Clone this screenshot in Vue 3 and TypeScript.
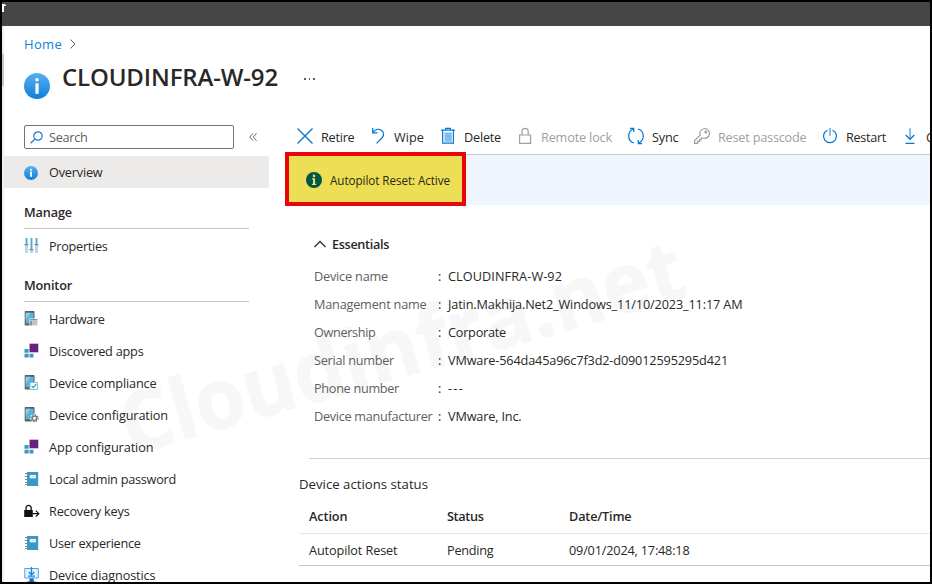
<script setup lang="ts">
import type { Directive } from 'vue'

interface NavItem { label: string; icon: string; width: number }
interface Command { label: string; icon: string; width: number; disabled?: boolean }
interface Essential { label: string; labelWidth: number; value: string; width: number }

// Tracks a text run so that it takes up the given width in pixels.
const vFit: Directive<HTMLElement, number> = {
  mounted(el, binding) {
    const count = (el.textContent ?? '').length
    const natural = el.getBoundingClientRect().width
    el.style.letterSpacing = `${(binding.value - natural) / count}px`
  },
}

const manage: NavItem[] = [{ label: 'Properties', icon: 'sliders', width: 58.5 }]

const monitor: NavItem[] = [
  { label: 'Hardware', icon: 'hardware', width: 55.5 },
  { label: 'Discovered apps', icon: 'apps', width: 94.5 },
  { label: 'Device compliance', icon: 'compliance', width: 107.5 },
  { label: 'Device configuration', icon: 'config', width: 119 },
  { label: 'App configuration', icon: 'apps', width: 104.5 },
  { label: 'Local admin password', icon: 'book', width: 127 },
  { label: 'Recovery keys', icon: 'lock', width: 80.5 },
  { label: 'User experience', icon: 'book', width: 91.5 },
  { label: 'Device diagnostics', icon: 'monitor', width: 106.5 },
]

const groups = [
  { title: 'Manage', width: 48, items: manage },
  { title: 'Monitor', width: 48, items: monitor },
]

const commands: Command[] = [
  { label: 'Retire', icon: 'close', width: 33.5 },
  { label: 'Wipe', icon: 'undo', width: 30 },
  { label: 'Delete', icon: 'trash', width: 37 },
  { label: 'Remote lock', icon: 'padlock', width: 71 },
  { label: 'Sync', icon: 'sync', width: 26.5 },
  { label: 'Reset passcode', icon: 'key', width: 88.5 },
  { label: 'Restart', icon: 'power', width: 40 },
  { label: 'Collect diagnostics', icon: 'download', width: 112 },
].map((c) => ({ ...c, disabled: c.icon === 'padlock' || c.icon === 'key' }))

const essentials: Essential[] = [
  { label: 'Device name', labelWidth: 74, value: 'CLOUDINFRA-W-92', width: 114 },
  { label: 'Management name', labelWidth: 112.5, value: 'Jatin.Makhija.Net2_Windows_11/10/2023_11:17 AM', width: 294.5 },
  { label: 'Ownership', labelWidth: 61.5, value: 'Corporate', width: 58 },
  { label: 'Serial number', labelWidth: 80, value: 'VMware-564da45a96c7f3d2-d09012595295d421', width: 280 },
  { label: 'Phone number', labelWidth: 85, value: '---', width: 16 },
  { label: 'Device manufacturer', labelWidth: 118.5, value: 'VMware, Inc.', width: 73.5 },
]
</script>

<template>
  <div class="frame">
    <svg class="watermark" width="928" height="580" viewBox="2 2 928 580">
      <text transform="translate(130 455) rotate(-15.900)" textLength="582" lengthAdjust="spacingAndGlyphs">Cloudinfra.net</text>
    </svg>
    <div class="topbar"><span class="mark"></span></div>
    <div class="page">
      <div class="edge"><span class="thumb"></span></div>
      <div class="content">
        <header class="head">
          <nav class="crumb">
            <a v-fit="38">Home</a>
            <svg width="8" height="12" viewBox="0 0 8 12"><path d="M1.500 1.500 6 6 1.500 10.500" fill="none" stroke="#605e5c" /></svg>
          </nav>
          <div class="titlebar">
            <svg class="title-icon" width="26" height="26" viewBox="0 0 16 16">
              <defs><linearGradient id="info" x1="0" y1="0" x2="0" y2="1"><stop offset="0" stop-color="#56b0ef" /><stop offset="1" stop-color="#0f7fdb" /></linearGradient></defs>
              <circle cx="8" cy="8" r="8" fill="url(#info)" />
              <circle cx="8" cy="4.200" r="1.100" fill="#fff" /><rect x="7" y="6.300" width="2" height="6.500" rx=".4" fill="#fff" />
            </svg>
            <h1><span v-fit="216">CLOUDINFRA-W-92</span></h1>
            <span class="more"><i></i><i></i><i></i></span>
          </div>
        </header>
        <div class="columns">
          <aside class="side">
            <div class="searchrow">
              <div class="search">
                <svg width="13" height="13" viewBox="0 0 13 13" fill="none" stroke="#1a7fd0" stroke-width="1.200"><circle cx="8" cy="5" r="4.200" /><path d="M5 8 .6 12.300" /></svg>
                <span v-fit="38.5">Search</span>
              </div>
              <svg width="8" height="8" viewBox="0 0 8 8" fill="none" stroke="#605e5c" stroke-width=".9"><path d="M4 .3.700 4 4 7.700M7.600.3 4.300 4l3.300 3.700" /></svg>
            </div>
            <div class="item selected">
              <svg width="16" height="16" viewBox="0 0 16 16"><circle cx="7" cy="9" r="7" fill="url(#info)" /><circle cx="7" cy="5.700" r="1" fill="#fff" /><rect x="6.100" y="7.500" width="1.800" height="5.300" fill="#fff" /></svg>
              <span v-fit="53.5">Overview</span>
            </div>
            <section v-for="g in groups" :key="g.title" class="group">
              <h2><span v-fit="g.width">{{ g.title }}</span></h2>
              <div v-for="n in g.items" :key="n.label" class="item">
                <svg width="16" height="16" viewBox="0 0 16 16">
                  <g v-if="n.icon === 'sliders'">
                    <path fill="#b5d9ea" d="M1 0h3v15H1zM6 0h3v15H6zM11 0h3v15h-3z" />
                    <path fill="#4fa9cf" d="M2 0h1v6H2zM7 0h1v11H7zM12 0h1v6h-1z" />
                    <path fill="#7a8c94" d="M.5 6h4v1.300h-4zM5.500 11h4v1.300h-4zM10.500 6h4v1.300h-4z" />
                  </g>
                  <g v-else-if="n.icon === 'hardware' || n.icon === 'compliance' || n.icon === 'config'">
                    <path fill="#5b6065" d="M1.500 0h8.200q.8 0 .8.800v12.900q0 .8-.8.800H1.500q-.8 0-.8-.8V.8q0-.8.800-.8z" />
                    <path fill="#59b4d9" d="M1.700 1.800h7.800v10.500H1.700z" />
                    <path fill="#8bcde6" d="M1.700 1.800h5L1.700 9z" />
                    <g v-if="n.icon === 'hardware'">
                      <path fill="#fff" d="M5.500 7.500H14V15H5.500z" /><path fill="#8c9094" d="M6 8h7.500v1.500H6zM6 10h2.500v4.500H6z" /><path fill="#c3c6c8" d="M9 10h4.500v4.500H9z" />
                    </g>
                    <g v-else-if="n.icon === 'compliance'">
                      <path fill="#fff" stroke="#7dc1e0" d="M6 7.500h7.500v7H6z" /><path d="m7.700 11 1.600 1.700 3-3.500" fill="none" stroke="#3999c6" stroke-width="1.200" />
                    </g>
                    <g v-else>
                      <circle cx="10.500" cy="11.200" r="4.300" fill="#fff" />
                      <circle cx="10.500" cy="11.200" r="2.300" fill="none" stroke="#75797d" stroke-width="1.500" />
                      <circle cx="10.500" cy="11.200" r="3.500" fill="none" stroke="#75797d" stroke-width="1.400" stroke-dasharray="1.350 1.400" />
                    </g>
                  </g>
                  <g v-else-if="n.icon === 'apps'">
                    <path fill="#68217a" d="M5.500.7h8.800v8.600H5.500z" />
                    <path fill="#3999c6" d="M.5 6h4.100v3.800H.5zM.5 10.700h4.100v3.800H.5zM5.500 10.700h4v3.800h-4z" />
                  </g>
                  <g v-else-if="n.icon === 'book'">
                    <path fill="#3999c6" d="M3 1h11.200v14H3z" /><path fill="#fff" d="M5.800 4h6v3.300h-6z" /><path fill="#b8dbec" d="M7 5h3.700v1.200H7z" />
                    <path fill="#7a8c94" d="M1 2h3v1H1zM1 5h3v1H1zM1 8h3v1H1zM1 11h3v1H1zM1 13h3v1H1z" />
                  </g>
                  <g v-else-if="n.icon === 'lock'">
                    <path d="M2 7.500V5a2.600 2.600 0 0 1 5.200 0v2.500" fill="none" stroke="#111" stroke-width="1.300" /><path fill="#111" d="M.2 7h8.600v7H.2z" />
                    <path d="M8.800 10.700h6M11.800 7.700l3 3-3 3" fill="none" stroke="#111" stroke-width="1.200" />
                  </g>
                  <g v-else>
                    <path d="M.8 1.500h13.500V11H.8z" fill="#e8f4fd" stroke="#4ba3e3" /><path d="M7.500 0v7.500M4.700 5l2.800 2.800L10.300 5M4 9.200h7" fill="none" stroke="#1683d8" stroke-width="1.300" /><path fill="#1d5fa8" d="M5.500 11.500h4.200v3H12V16H3v-1.500h2.500z" />
                  </g>
                </svg>
                <span v-fit="n.width">{{ n.label }}</span>
              </div>
            </section>
          </aside>

          <main class="main">
            <div class="commands">
              <div v-for="c in commands" :key="c.label" class="command" :class="{ disabled: c.disabled }">
                <svg width="16" height="18" viewBox="0 0 16 18" fill="none" stroke="currentColor" stroke-width="1.200">
                  <path v-if="c.icon === 'close'" d="m.5 1.500 15 15M15.500 1.500l-15 15" stroke-width="1.400" />
                  <path v-else-if="c.icon === 'undo'" d="M2.700 1v4.800h4.800M2.700 5.600C5.500 2 9 1.700 11 2.900c3 1.800 3.400 5.200 1.300 7.600L6.500 16.300" />
                  <g v-else-if="c.icon === 'trash'"><path fill="#83bdec" stroke="none" d="M4.500 5.500h7.300v9.300H4.500z" /><path d="M1 3.200h14M2.700 3.200v13h10.700v-13M5.600 3V1.300h4.800V3" /></g>
                  <path v-else-if="c.icon === 'padlock'" d="M2.600 8h11v8.300h-11zM5 8V4.500a3.100 3.100 0 0 1 6.200 0V8" />
                  <path v-else-if="c.icon === 'sync'" d="M6 16C2.500 15 .7 12 .7 9c0-3 1.800-5.700 4.500-7M2 1.300h3.700V5M10 2c3.500 1 5.300 4 5.300 7 0 3-1.800 5.700-4.500 7m3.200.7h-3.700V13" />
                  <g v-else-if="c.icon === 'key'"><path d="M6.200 8.200A4.800 4.800 0 1 1 9 11H7.200v1.700H5.500v1.700H3.700v1.900H.6v-2.800z" /><circle cx="11.800" cy="5" r=".9" /></g>
                  <g v-else-if="c.icon === 'power'"><path d="M5.500 3.200a6.500 6.500 0 1 0 5 0" /><path d="M8 1v8" stroke="#6eb4ed" stroke-width="1.700" /></g>
                  <g v-else><path d="M8 1.200v11" stroke="#5eaae7" stroke-width="1.500" /><path d="m3.700 8 4.300 4.300L12.300 8M3.500 16.300h9" stroke-width="1.300" /></g>
                </svg>
                <span v-fit="c.width">{{ c.label }}</span>
              </div>
            </div>
            <div class="banner">
              <div class="callout">
                <svg width="16" height="16" viewBox="0 0 16 16"><circle cx="8" cy="8" r="8" fill="#00564b" /><circle cx="8" cy="3.900" r="1.300" fill="#ecdf55" /><path fill="#ecdf55" d="M6 6.200h3.100v5.500h1v1.200H6v-1.200h1V7.400H6z" /></svg>
                <span v-fit="120">Autopilot Reset: Active</span>
              </div>
            </div>
            <section class="essentials">
              <h3>
                <svg width="12" height="8" viewBox="0 0 12 8"><path d="M.5 7 6 1.500 11.500 7" fill="none" stroke="#323130" stroke-width="1.300" /></svg>
                <span v-fit="57">Essentials</span>
              </h3>
              <dl>
                <div v-for="e in essentials" :key="e.label" class="pair">
                  <dt><span v-fit="e.labelWidth">{{ e.label }}</span></dt>
                  <dd>:</dd>
                  <dd><span v-fit="e.width">{{ e.value }}</span></dd>
                </div>
              </dl>
            </section>
            <section class="status">
              <h4><span v-fit="129">Device actions status</span></h4>
              <div class="row header">
                <span><b v-fit="38.5">Action</b></span><span><b v-fit="36.5">Status</b></span><span><b v-fit="62.5">Date/Time</b></span>
              </div>
              <div class="row">
                <span><i v-fit="88.5">Autopilot Reset</i></span><span><i v-fit="46.5">Pending</i></span><span><i v-fit="120.500">09/01/2024, 17:48:18</i></span>
              </div>
            </section>
          </main>
        </div>
      </div>
    </div>
  </div>
</template>

<style>
body { margin: 0; background: #fff; }
</style>

<style scoped>
.frame {
  position: relative;
  box-sizing: border-box;
  width: 932px;
  height: 584px;
  border: 2px solid #000;
  overflow: hidden;
  background: #fff;
  color: #292827;
  font: 12.7px/18px "Open Sans", "Noto Sans", sans-serif;
  white-space: nowrap;
}
.watermark { position: absolute; left: 0; top: 0; }
.watermark text { font-size: 84px; font-weight: 700; fill: #f7f7f7; stroke: #f7f7f7; stroke-width: 1px; }
.topbar { box-sizing: border-box; height: 24px; padding-top: 2px; background: #484644; }
.mark { display: block; box-sizing: border-box; width: 4px; height: 8px; border: solid #fff; border-width: 2px 0 0 2px; border-top-right-radius: 2px; }
.page { position: relative; display: flex; height: 556px; }
.edge { flex: none; width: 2px; background: #f0efee; }
.thumb { display: block; height: 32px; margin-top: 28px; background: #c8c6c4; }
.content { flex: 1; min-width: 0; }
.head { height: 95px; padding-left: 20px; box-sizing: border-box; }
.crumb { display: flex; align-items: center; gap: 7px; padding-top: 9px; }
.crumb a { color: #1180d6; font-size: 13px; }
.titlebar { display: flex; height: 50px; }
.title-icon { flex: none; margin-top: 20px; }
h1, h2, h3, h4, dl, dd { margin: 0; font-size: inherit; }
h1 { width: 216px; margin: 8px 0 0 12px; font-size: 24px; line-height: 32px; font-weight: 600; }
.more { display: flex; gap: 3px; margin: 25px 0 0 26px; }
.more i { width: 1.500px; height: 1.500px; background: #605e5c; }
.columns { display: flex; }
.side { flex: none; width: 265px; }
.searchrow { display: flex; align-items: center; gap: 15px; height: 32px; padding-left: 20px; }
.search { display: flex; align-items: center; gap: 6px; box-sizing: border-box; width: 210px; height: 24px; padding-left: 5px; border: 1px solid #777573; border-radius: 2px; color: #605e5c; }
.item { display: flex; align-items: center; gap: 9px; height: 32px; padding-left: 20px; }
.item.selected { margin-top: 3px; background: #edebe9; }
.item svg { flex: none; }
.group h2 { box-sizing: border-box; width: 225px; height: 40px; margin: 0 0 1px 20px; padding-top: 14px; border-bottom: 1px solid #c8c6c4; font-weight: 600; }
.group:nth-of-type(1) h2 { margin-top: 1px; }
.main { flex: 1; min-width: 0; padding-left: 16px; }
.commands { display: grid; grid-template-columns: 73px 70px 77px 111px 66px 128px 80px 130px; height: 34px; box-sizing: border-box; padding: 0 0 1px 12px; margin-right: -200px; border-bottom: 1px solid #c8c8c8; }
.command { display: flex; align-items: center; gap: 8px; }
.command svg { flex: none; margin-bottom: 2px; color: #0078d4; }
.command.disabled, .command.disabled svg { color: #a19f9d; }
.banner { position: relative; height: 50px; background: #eef5ff; }
.callout { position: absolute; left: 0; top: -3px; display: flex; align-items: center; gap: 8px; box-sizing: border-box; width: 181px; height: 54px; padding: 2px 0 0 17px; border: 4px solid #ea0606; background: #ecdf55; color: #2a2814; font-size: 11.700px; }
.essentials { padding: 30px 0 0 29px; }
.essentials h3 { display: flex; align-items: center; gap: 6px; height: 18px; font-weight: 600; }
.essentials dl { padding-top: 9px; }
.pair { display: grid; grid-template-columns: 124px 10px 1fr; align-items: center; height: 28px; }
.pair dt { color: #605e5c; }
.status { margin: 28px 0 0 14px; }
.status::before { content: ""; display: block; height: 1px; margin-left: 10px; background: #d0cfce; }
.status h4 { padding-top: 16px; height: 25px; font-size: 13.200px; font-weight: 400; }
.row { display: grid; grid-template-columns: 138px 122px 1fr; align-items: center; box-sizing: border-box; height: 32px; padding-left: 10px; border-bottom: 1px solid #c8c6c4; }
.row.header { height: 34px; padding-bottom: 1px; border-color: #e6e5e4; }
.row b { font-weight: 600; }
.row i { font-style: normal; }
</style>
